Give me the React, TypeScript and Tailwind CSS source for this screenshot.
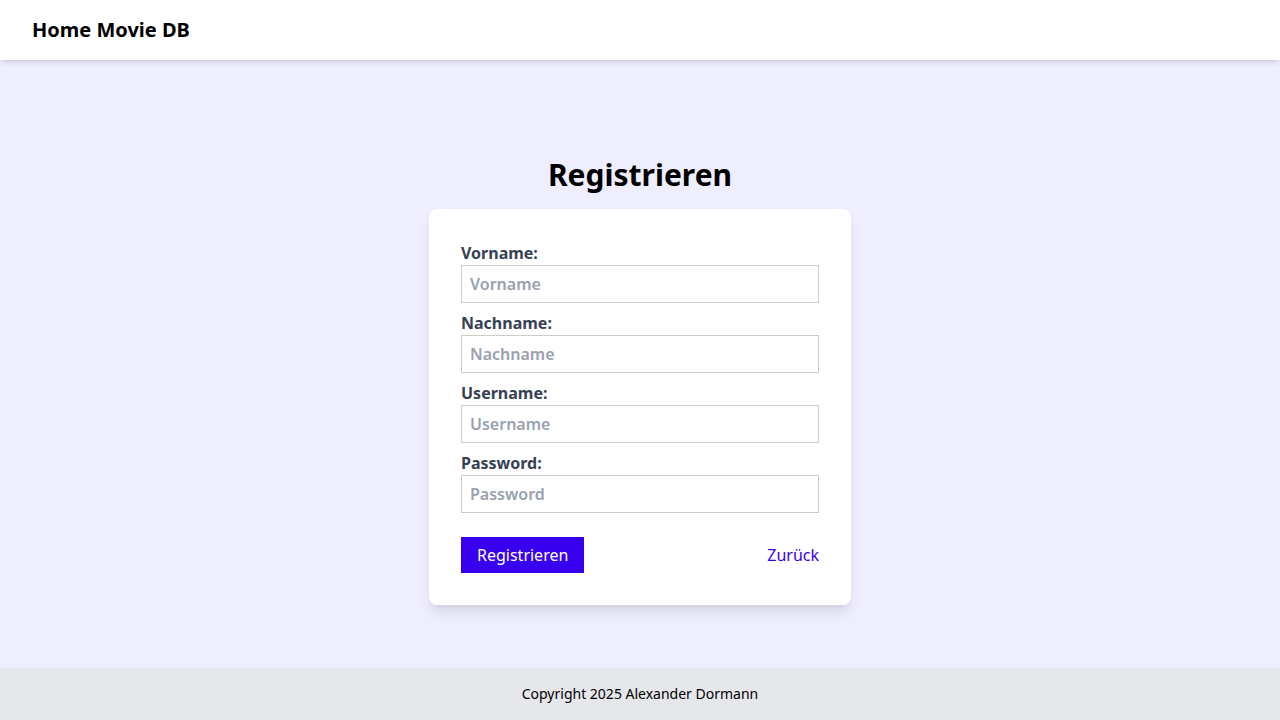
import React from "react";

const fields = [
  { label: "Vorname:", ph: "Vorname", type: "text" },
  { label: "Nachname:", ph: "Nachname", type: "text" },
  { label: "Username:", ph: "Username", type: "text" },
  { label: "Password:", ph: "Password", type: "password" },
];

export default function App() {
  return (
    <div
      className="min-h-screen flex flex-col bg-[#eeeeff]"
      style={{ fontFamily: '"Noto Sans", sans-serif' }}
    >
      <header className="h-[60px] bg-white shadow-md flex items-center px-8 relative z-10">
        <h1 className="text-xl font-bold text-black">Home Movie DB</h1>
      </header>
      <main className="flex-1 flex flex-col items-center pt-[97px]">
        <h2 className="text-3xl font-bold text-black leading-9 mb-4">Registrieren</h2>
        <div className="w-[422px] bg-white rounded-lg shadow-lg p-8">
          {fields.map((f) => (
            <div key={f.label} className="mb-2">
              <label className="block text-base font-bold text-gray-700 leading-6">{f.label}</label>
              <input
                type={f.type}
                placeholder={f.ph}
                className="block w-full h-[38px] border border-[#cccccc] px-2 text-base font-semibold text-gray-700 placeholder:text-gray-400 outline-none"
              />
            </div>
          ))}
          <div className="flex items-center justify-between mt-6">
            <button className="h-9 px-4 bg-[#3700ee] text-white text-base">Registrieren</button>
            <a href="#" className="text-[#3700ee] text-base">Zurück</a>
          </div>
        </div>
      </main>
      <footer className="h-[52px] bg-gray-200 flex items-center justify-center text-sm text-black">
        Copyright 2025 Alexander Dormann
      </footer>
    </div>
  );
}
